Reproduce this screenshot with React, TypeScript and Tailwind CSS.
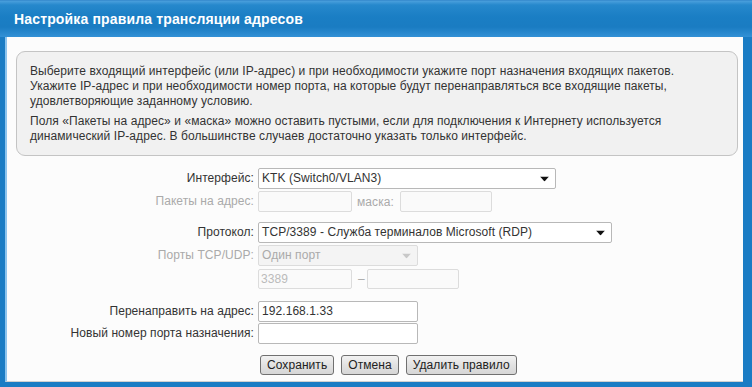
import React from "react";

const Caret = ({ light }: { light?: boolean }) => (
  <svg width="9" height="5" viewBox="0 0 9 5" className="absolute right-[6px] top-1/2 -translate-y-1/2">
    <path d="M0 0 H9 L4.5 5 Z" fill={light ? "#c8c8c8" : "#111"} />
  </svg>
);

export default function App() {
  const font = { fontFamily: '"Liberation Sans", Arial, sans-serif' };
  return (
    <div className="w-[752px] h-[387px] bg-[#1a7cc4] flex flex-col text-[12px] text-[#333] tracking-[0.07px]" style={font}>
      <div className="h-[37px] shrink-0 flex items-center pl-[14px] bg-[linear-gradient(#4a9fdc_0px,#2688cc_4px,#1a7ec4_16px,#1a7cc2_26px,#3593d8_37px)] border-t border-[#3a8ed0]">
        <span className="text-white font-bold text-[14px] tracking-[0.15px]">Настройка правила трансляции адресов</span>
      </div>
      <div className="flex-1 ml-[5px] mr-[9px] mb-[5px] bg-[#fcfcfc] border-l-2 border-[#8cc4ee] border-b border-b-[#d0d0d0] flex flex-col">
        <div className="mt-[14px] ml-[9px] mr-[5px] h-[105px] rounded-[9px] border border-[#c4c4c4] bg-[#f1f1f1] pl-[13px] pt-[12px] leading-[15px]">
          <p>Выберите входящий интерфейс (или IP-адрес) и при необходимости укажите порт назначения входящих пакетов.<br />Укажите IP-адрес и при необходимости номер порта, на которые будут перенаправляться все входящие пакеты,<br />удовлетворяющие заданному условию.</p>
          <p className="mt-[5px]">Поля «Пакеты на адрес» и «маска» можно оставить пустыми, если для подключения к Интернету используется<br />динамический IP-адрес. В большинстве случаев достаточно указать только интерфейс.</p>
        </div>
        <div className="mt-[12px] grid grid-cols-[247px_1fr] gap-x-[4px] items-center">
          <span className="text-right h-[21px] leading-[21px]">Интерфейс:</span>
          <div className="relative w-[298px] h-[21px] border border-[#b8b8b8] rounded-[2px] bg-white pl-[3px] leading-[19px]">KTK (Switch0/VLAN3)<Caret /></div>

          <span className="text-right h-[21px] leading-[21px] mt-[2px] text-[#aaa]">Пакеты на адрес:</span>
          <div className="flex items-center mt-[2px]">
            <div className="w-[94px] h-[21px] border border-[#dcdcdc] rounded-[2px] bg-[#fafafa]" />
            <span className="ml-[5px] text-[#aaa]">маска:</span>
            <div className="ml-[6px] w-[92px] h-[21px] border border-[#dcdcdc] rounded-[2px] bg-[#fafafa]" />
          </div>

          <span className="text-right h-[21px] leading-[21px] mt-[10px]">Протокол:</span>
          <div className="relative mt-[10px] w-[354px] h-[21px] border border-[#b8b8b8] rounded-[2px] bg-white pl-[3px] leading-[19px]">TCP/3389 - Служба терминалов Microsoft (RDP)<Caret /></div>

          <span className="text-right h-[21px] leading-[21px] mt-[2px] text-[#aaa]">Порты TCP/UDP:</span>
          <div className="relative mt-[2px] w-[160px] h-[21px] border border-[#dcdcdc] rounded-[2px] bg-[#f4f4f4] pl-[3px] leading-[19px] text-[#aaa]">Один порт<Caret light /></div>

          <span className="h-[21px] mt-[2px]" />
          <div className="flex items-center mt-[2px]">
            <div className="w-[94px] h-[20px] border border-[#dcdcdc] rounded-[2px] bg-[#fafafa] pl-[2px] leading-[18px] text-[#bbb]">3389</div>
            <span className="ml-[6px] text-[#aaa]">–</span>
            <div className="ml-[2px] w-[92px] h-[20px] border border-[#dcdcdc] rounded-[2px] bg-[#fafafa]" />
          </div>

          <span className="text-right h-[21px] leading-[21px] mt-[12px]">Перенаправить на адрес:</span>
          <div className="mt-[12px] w-[160px] h-[21px] border border-[#b8b8b8] rounded-[2px] bg-white pl-[3px] leading-[19px]">192.168.1.33</div>

          <span className="text-right h-[21px] leading-[21px] mt-[1px]">Новый номер порта назначения:</span>
          <div className="mt-[1px] w-[160px] h-[21px] border border-[#b8b8b8] rounded-[2px] bg-white" />
        </div>
        <div className="mt-[11px] ml-[253px] flex gap-[7px]">
          <button className="h-[20px] px-[6px] border border-[#707070] rounded-[3px] bg-[linear-gradient(#f2f2f2,#e2e2e2_50%,#d6d6d6)] leading-[18px] text-[#222]">Сохранить</button>
          <button className="h-[20px] px-[6px] border border-[#707070] rounded-[3px] bg-[linear-gradient(#f2f2f2,#e2e2e2_50%,#d6d6d6)] leading-[18px] text-[#222]">Отмена</button>
          <button className="h-[20px] px-[6px] border border-[#707070] rounded-[3px] bg-[linear-gradient(#f2f2f2,#e2e2e2_50%,#d6d6d6)] leading-[18px] text-[#222]">Удалить правило</button>
        </div>
      </div>
    </div>
  );
}
